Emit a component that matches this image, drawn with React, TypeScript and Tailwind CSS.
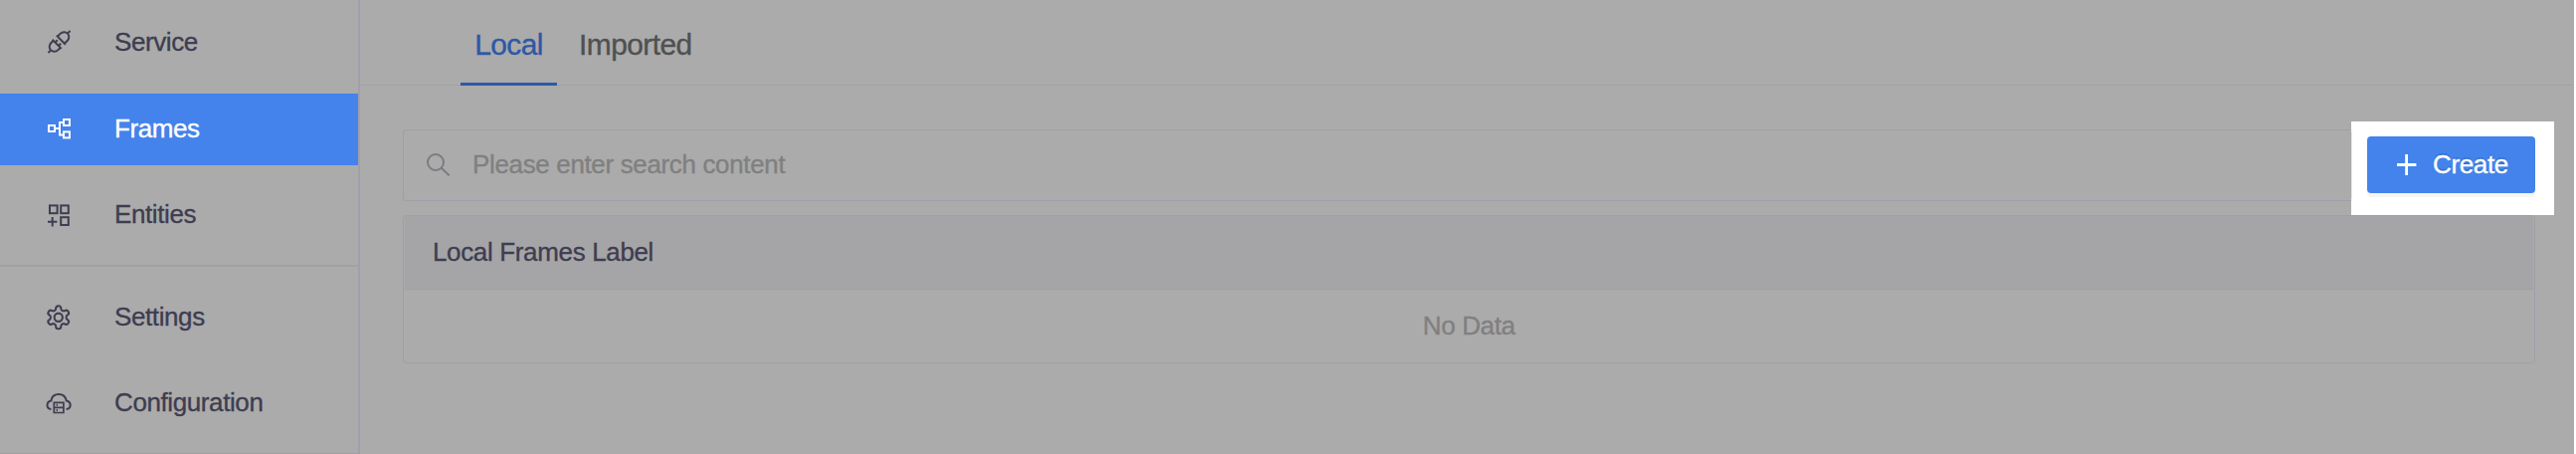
import type { ReactNode } from "react";

const stroke = { fill: "none", stroke: "currentColor", strokeWidth: 2 } as const;

function PlugIcon() {
  return (
    <svg className="-mt-0.5" width="24" height="24" viewBox="0 0 24 24" {...stroke}>
      <g transform="translate(.5 0) rotate(45 12 12)">
        <path d="M12 -3.600V-.2M12 24.200v3.400" />
        <path d="M5.600 9.400h12.800M7 9.200V5.500a5 5.400 0 0 1 10 0v3.700" />
        <path d="M5.600 15.300h12.800M7 15.500v3a5 5.400 0 0 0 10 0v-3" />
        <path d="M9.600 12v3M14.400 12v3" />
      </g>
    </svg>
  );
}

function FramesIcon() {
  return (
    <svg className="-mt-0.5" width="24" height="24" viewBox="0 0 24 24" {...stroke}>
      <rect x="2" y="9" width="6" height="6" />
      <rect x="17" y="3" width="6" height="6" />
      <rect x="17" y="15.400" width="6" height="6" />
      <path d="M8.500 12h4M16.500 6H13v12.400h3.500" />
    </svg>
  );
}

function EntitiesIcon() {
  return (
    <svg width="24" height="24" viewBox="0 0 24 24" {...stroke}>
      <rect x="3" y="2.400" width="7.600" height="7.800" />
      <rect x="14.200" y="2.400" width="7.600" height="7.800" />
      <rect x="14.200" y="14.200" width="7.600" height="7.800" />
      <path d="M1 18.700h9.400M5.700 14v9.600" />
    </svg>
  );
}

function GearIcon() {
  return (
    <svg className="-mt-px" width="27.500" height="27.500" viewBox="0 0 24 24" {...stroke} strokeWidth="1.800" strokeLinejoin="round">
      <path d="M12.220 2h-.44a2 2 0 0 0-2 2v.18a2 2 0 0 1-1 1.730l-.43.25a2 2 0 0 1-2 0l-.15-.08a2 2 0 0 0-2.730.73l-.22.38a2 2 0 0 0 .73 2.730l.15.1a2 2 0 0 1 1 1.720v.51a2 2 0 0 1-1 1.740l-.15.09a2 2 0 0 0-.73 2.730l.22.38a2 2 0 0 0 2.730.73l.15-.08a2 2 0 0 1 2 0l.43.25a2 2 0 0 1 1 1.730V20a2 2 0 0 0 2 2h.44a2 2 0 0 0 2-2v-.18a2 2 0 0 1 1-1.730l.43-.25a2 2 0 0 1 2 0l.15.08a2 2 0 0 0 2.730-.73l.22-.39a2 2 0 0 0-.73-2.730l-.15-.08a2 2 0 0 1-1-1.740v-.5a2 2 0 0 1 1-1.740l.15-.09a2 2 0 0 0 .73-2.730l-.22-.38a2 2 0 0 0-2.730-.73l-.15.08a2 2 0 0 1-2 0l-.43-.25a2 2 0 0 1-1-1.730V4a2 2 0 0 0-2-2z" />
      <circle cx="12" cy="12" r="3.600" />
    </svg>
  );
}

function CloudIcon() {
  return (
    <svg width="26" height="26" viewBox="0 0 26 26" {...stroke}>
      <path d="M5.400 19C2.800 18.800 1.500 17 1.500 15.100c0-2.600 1.600-4.200 3.900-4.600C6 6.500 9 4.100 13 4.100s7 2.400 7.800 6.400c2.300.4 3.900 2 3.900 4.600 0 1.900-1.500 3.700-4.100 3.900" />
      <path d="M8.300 12.300h9.600v10.200H8.300zM8.300 17.400h9.600" strokeWidth="1.700" />
      <path d="M11.300 13.800v2M11.300 19v2" strokeWidth="1.300" />
    </svg>
  );
}

function SearchIcon() {
  return (
    <svg width="24" height="24" viewBox="0 0 24 24" {...stroke}>
      <circle cx="9" cy="9" r="8" />
      <path d="M14.700 14.700l8 7.600" />
    </svg>
  );
}

function PlusIcon() {
  return (
    <svg width="20" height="21" viewBox="0 0 20 21" fill="none" stroke="currentColor" strokeWidth="2.800">
      <path d="M0 10.500h19.400M9.600 0v21" />
    </svg>
  );
}

function NavItem({ icon, label, active = false }: { icon: ReactNode; label: string; active?: boolean }) {
  return (
    <a
      className={`flex h-[72px] items-center text-[26px] ${
        active ? "bg-[#4383eb] text-white" : "text-[#3e3d51]"
      }`}
    >
      <span className="flex w-[115px] shrink-0 justify-center pr-[44px] pl-[47px] [&>svg]:shrink-0 [&>svg]:overflow-visible">{icon}</span>
      <span className="-mt-0.5 tracking-[-0.4px]">{label}</span>
    </a>
  );
}

export default function App() {
  return (
    <div className="flex h-[456px] w-[2590px] overflow-hidden border-r-2 border-white bg-[#ababab] font-['Liberation_Sans',Arial,sans-serif] [-webkit-text-stroke:0.35px]">
      <aside className="flex w-[362px] shrink-0 flex-col border-r-2 border-b border-r-[#a0a0a9] border-b-[#a0a0a5]">
        <nav className="flex h-[266px] flex-col pt-[7px]">
          <NavItem icon={<PlugIcon />} label="Service" />
          <div className="mt-[15px] mb-[14px]">
            <NavItem icon={<FramesIcon />} label="Frames" active />
          </div>
          <NavItem icon={<EntitiesIcon />} label="Entities" />
        </nav>
        <nav className="flex flex-col gap-[14px] border-t-2 border-[#a2a2a4] pt-[15px]">
          <NavItem icon={<GearIcon />} label="Settings" />
          <NavItem icon={<CloudIcon />} label="Configuration" />
        </nav>
      </aside>

      <main className="flex min-w-0 grow flex-col">
        <div className="flex h-[86px] shrink-0 border-b border-[#a2a2a5] pl-[101px] text-[30px] tracking-[-0.6px]">
          <button className="-mb-px flex h-[86px] w-[97px] items-center justify-center border-b-[3px] border-[#2d5aa8] pt-1.5 text-[#2d58a6]">
            Local
          </button>
          <button className="flex items-center pt-1 pl-[22px] text-[#505050]">Imported</button>
        </div>

        <div className="mt-[36px] flex h-[94px] pl-[43px]">
          <label className="relative z-10 mt-2 flex h-[72px] w-[1960px] shrink-0 items-center rounded-[3px] border border-[#9f9fa7] border-r-[#e7e7f2] pl-[23px] text-[#7b7b84]">
            <SearchIcon />
            <span className="-mt-0.5 ml-[22px] text-[26px] tracking-[-0.35px] text-[#808080]">
              Please enter search content
            </span>
          </label>
          <div className="-ml-px h-[94px] w-[204px] shrink-0 bg-white pt-[15px] pl-4">
            <button className="flex h-[57px] w-[169px] items-center rounded-[4px] bg-[#4383eb] pl-[30px] text-[26px] tracking-[-0.35px] text-white shadow-[0_4px_0_#f5f5f5] [text-shadow:0_-2px_0_rgba(0,0,0,0.12)]">
              <PlusIcon />
              <span className="ml-4">Create</span>
            </button>
          </div>
        </div>

        <section className="ml-[43px] flex h-[149px] w-[2144px] shrink-0 flex-col rounded-[4px] border border-[#9f9fa9] text-[26px]">
          <div className="mx-px flex h-[74px] items-center rounded-t-[3px] border-b border-[#a0a0a3] bg-[#a5a5a7] pl-[28px] tracking-[-0.35px] text-[#3e3d51]">
            Local Frames Label
          </div>
          <div className="flex grow items-center justify-center tracking-[-0.35px] text-[#808080]">No Data</div>
        </section>
      </main>
    </div>
  );
}
